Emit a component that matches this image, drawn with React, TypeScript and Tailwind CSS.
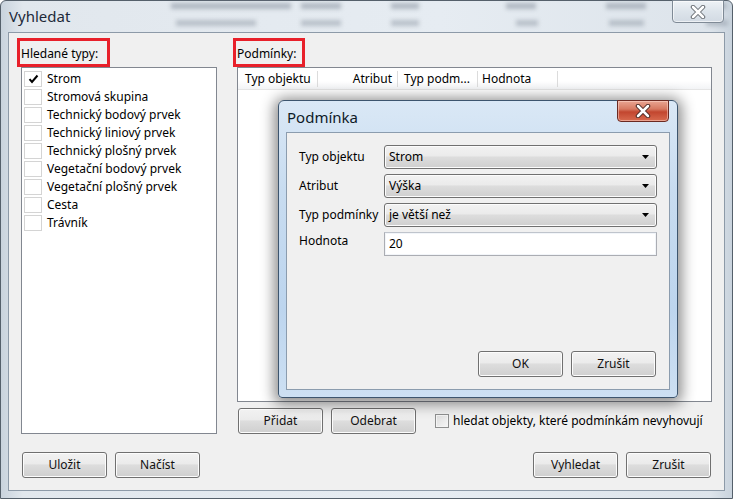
import React from "react";

const font = "font-['Segoe_UI','Noto_Sans','Open_Sans',sans-serif]";

function Btn({ label, className = "" }: { label: string; className?: string }) {
  return (
    <div
      className={`flex h-[26px] w-[85px] items-center justify-center rounded-[3px] border border-[#707070] bg-[linear-gradient(#f2f2f2,#ebebeb_45%,#dddddd_50%,#cfcfcf)] text-[12px] text-[#111] shadow-[inset_0_0_0_1px_#fcfcfc] ${className}`}
    >
      {label}
    </div>
  );
}

function Check({ checked = false }: { checked?: boolean }) {
  return (
    <div className="flex h-[16px] w-[18px] shrink-0 items-center justify-center border border-[#d4d4d4] bg-white">
      {checked && (
        <svg width="11" height="10" viewBox="0 0 11 10">
          <path d="M1.5 5.2 L4 8 L9.5 1.5" stroke="#000" strokeWidth="2" fill="none" />
        </svg>
      )}
    </div>
  );
}

function Combo({ value }: { value: string }) {
  return (
    <div className="flex h-[24px] flex-1 items-center justify-between rounded-[3px] border border-[#707070] bg-[linear-gradient(#f2f2f2,#ebebeb_45%,#dddddd_50%,#cfcfcf)] pl-[4px] pr-[7px] text-[12px] text-black shadow-[inset_0_0_0_1px_#fcfcfc]">
      <span>{value}</span>
      <svg width="7" height="4" viewBox="0 0 7 4">
        <polygon points="0,0 7,0 3.5,4" fill="#000" />
      </svg>
    </div>
  );
}

const items = [
  "Strom",
  "Stromová skupina",
  "Technický bodový prvek",
  "Technický liniový prvek",
  "Technický plošný prvek",
  "Vegetační bodový prvek",
  "Vegetační plošný prvek",
  "Cesta",
  "Trávník",
];

const blurRow1 = [
  [170, 120],
  [300, 40],
  [390, 28],
  [505, 30],
  [605, 40],
  [700, 25],
];
const blurRow2 = [
  [175, 80],
  [300, 40],
  [390, 28],
  [515, 22],
  [608, 35],
  [705, 22],
];

export default function App() {
  return (
    <div className={`relative h-[499px] w-[733px] overflow-hidden ${font} text-[12px] text-black`}>
      <div className="flex h-[499px] w-[733px] flex-col rounded-t-[6px] border border-[#55606b] bg-[linear-gradient(90deg,#c9d3dd,#e1e7ed_3%,#e6ecf2_60%,#dde4eb_97%,#c9d3dd)]">
        {/* title bar */}
        <div className="relative h-[31px] shrink-0">
          <div className="pointer-events-none absolute inset-0 overflow-hidden blur-[2px]">
            {blurRow1.map(([x, w]) => (
              <div
                key={`a${x}`}
                className="absolute top-[2px] h-[6px] bg-[#8e98a4] opacity-60"
                style={{ left: x, width: w }}
              />
            ))}
            {blurRow2.map(([x, w]) => (
              <div
                key={`b${x}`}
                className="absolute top-[19px] h-[6px] bg-[#8e98a4] opacity-50"
                style={{ left: x, width: w }}
              />
            ))}
          </div>
          <div className="relative pl-[8px] pt-[5px] text-[15px] leading-[20px] text-[#1d2a3a]">Vyhledat</div>
          <div className="absolute right-[8px] top-[-1px] flex h-[23px] w-[52px] items-center justify-center rounded-b-[4px] border border-[#7f8a96] bg-[linear-gradient(#eef2f6,#dde4eb_50%,#d2dae3)] shadow-[inset_0_0_0_1px_rgba(255,255,255,0.6)]">
            <svg width="16" height="14" viewBox="0 0 16 14">
              <path d="M3 2 L13 12 M13 2 L3 12" stroke="#6a6f75" strokeWidth="4.5" strokeLinecap="round" />
              <path d="M3 2 L13 12 M13 2 L3 12" stroke="#ffffff" strokeWidth="2.5" strokeLinecap="round" />
            </svg>
          </div>
        </div>

        {/* client */}
        <div className="mx-[7px] mb-[7px] flex flex-1 flex-col border border-[#8d9aa8] bg-[#f0f0f0] pt-[5px]">
          <div className="flex flex-1 pl-[12px] pr-[12px]">
            {/* left */}
            <div className="flex w-[196px] flex-col">
              <div className="-ml-[4px] h-[29px] w-[93px] border-[3px] border-[#e8202a] pl-[1px] pt-[6px] leading-[14px]">
                Hledané typy:
              </div>
              <div className="flex-1 border border-[#828790] bg-white pl-[2px] pt-[2px]">
                {items.map((t, i) => (
                  <div key={t} className="flex h-[18px] items-center gap-[5px]">
                    <Check checked={i === 0} />
                    <span className="leading-[16px]">{t}</span>
                  </div>
                ))}
              </div>
            </div>

            {/* right */}
            <div className="ml-[20px] flex flex-1 flex-col">
              <div className="-ml-[4px] h-[29px] w-[72px] border-[3px] border-[#e8202a] pl-[1px] pt-[6px] leading-[14px]">
                Podmínky:
              </div>
              <div className="flex flex-1 flex-col border border-[#828790] bg-white">
                <div className="flex h-[22px] items-center border-b border-[#e5e5e5] bg-[linear-gradient(#ffffff,#ffffff_60%,#f3f4f6)]">
                  <div className="flex h-[16px] w-[80px] items-center border-r border-[#dcdcdc] pl-[7px]">Typ objektu</div>
                  <div className="flex h-[16px] w-[80px] items-center justify-end border-r border-[#dcdcdc] pr-[5px]">Atribut</div>
                  <div className="flex h-[16px] w-[80px] items-center border-r border-[#dcdcdc] pl-[6px]">Typ podm...</div>
                  <div className="flex h-[16px] w-[80px] items-center border-r border-[#dcdcdc] pl-[4px]">Hodnota</div>
                </div>
              </div>
              <div className="mt-[6px] flex h-[26px] items-center pl-[1px]">
                <Btn label="Přidat" className="w-[84px]" />
                <Btn label="Odebrat" className="ml-[8px] w-[84px]" />
                <div className="ml-[19px] h-[14px] w-[14px] border border-[#8e8f8f] bg-[linear-gradient(135deg,#dcdcdc,#f6f6f6)] shadow-[inset_0_0_0_1px_#f4f4f4]" />
                <span className="ml-[4px]">hledat objekty, které podmínkám nevyhovují</span>
              </div>
            </div>
          </div>

          {/* bottom buttons */}
          <div className="mb-[12px] mt-[18px] flex pl-[13px] pr-[13px]">
            <Btn label="Uložit" />
            <Btn label="Načíst" className="ml-[8px]" />
            <div className="flex-1" />
            <Btn label="Vyhledat" />
            <Btn label="Zrušit" className="ml-[8px]" />
          </div>
        </div>
      </div>

      {/* modal dialog */}
      <div className="absolute left-[278px] top-[100px] flex h-[298px] w-[400px] flex-col rounded-t-[6px] rounded-b-[4px] border border-[#3d556e] bg-[linear-gradient(#dae8f6,#c8dcf0_30%,#bdd5ee_70%,#cde0f3)] shadow-[0_2px_14px_4px_rgba(0,0,0,0.45)]">
        <div className="relative h-[31px] shrink-0">
          <div className="pl-[8px] pt-[6px] text-[15px] leading-[20px] text-[#0e1a28]">Podmínka</div>
          <div className="absolute right-[8px] top-[-1px] flex h-[22px] w-[52px] items-center justify-center rounded-b-[4px] border border-[#6b2a22] bg-[linear-gradient(#e9a592,#d77a62_40%,#c2462f_55%,#d86b4f)] shadow-[inset_0_0_0_1px_rgba(255,220,210,0.5)]">
            <svg width="16" height="14" viewBox="0 0 16 14">
              <path d="M3 2 L13 12 M13 2 L3 12" stroke="#4a2a25" strokeWidth="4.5" strokeLinecap="round" />
              <path d="M3 2 L13 12 M13 2 L3 12" stroke="#ffffff" strokeWidth="2.5" strokeLinecap="round" />
            </svg>
          </div>
        </div>
        <div className="mx-[7px] mb-[7px] flex flex-1 flex-col border border-[#8b9cae] bg-[#f0f0f0] px-[12px] pt-[12px]">
          <div className="flex flex-col gap-[5px]">
            <div className="flex items-center">
              <span className="w-[85px]">Typ objektu</span>
              <Combo value="Strom" />
            </div>
            <div className="flex items-center">
              <span className="w-[85px]">Atribut</span>
              <Combo value="Výška" />
            </div>
            <div className="flex items-center">
              <span className="w-[85px]">Typ podmínky</span>
              <Combo value="je větší než" />
            </div>
            <div className="flex items-start">
              <span className="w-[85px] pt-[1px] leading-[16px]">Hodnota</span>
              <div className="flex h-[24px] flex-1 items-center border border-[#abadb3] border-t-[#bfc4cc] bg-white pl-[4px] shadow-[inset_0_0_0_1px_#f2f5f9]">
                20
              </div>
            </div>
          </div>
          <div className="flex-1" />
          <div className="mb-[12px] flex justify-end pr-[1px]">
            <Btn label="OK" />
            <Btn label="Zrušit" className="ml-[8px]" />
          </div>
        </div>
      </div>
    </div>
  );
}
